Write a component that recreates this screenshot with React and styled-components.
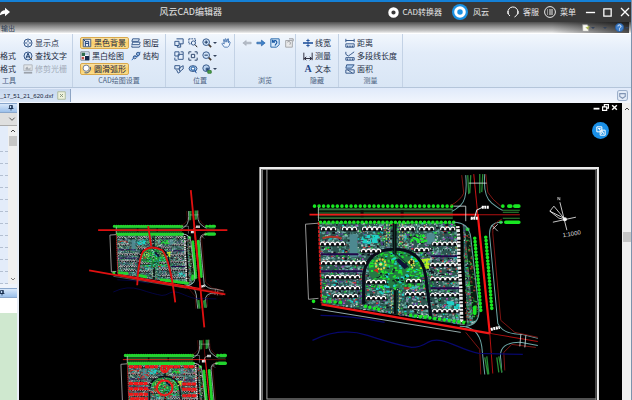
import React from "react";
import styled, { createGlobalStyle } from "styled-components";

const GlobalStyle = createGlobalStyle`
  * {
    box-sizing: border-box;
  }

  body {
    margin: 0;
    background: #000;
    overflow: hidden;
    font-family: "Liberation Sans", "Noto Sans CJK SC", sans-serif;
  }

  button {
    margin: 0;
    padding: 0;
    border: 0;
    background: none;
    color: inherit;
    font: inherit;
    cursor: pointer;
  }
`;

const Window = styled.div`
  display: flex;
  flex-direction: column;
  height: 100vh;
  border-right: 1px solid #7d93ad;
`;

const TitleBar = styled.header`
  display: flex;
  align-items: center;
  height: 22px;
  border-top: 2px solid #1480d6;
  background: #383838;
  color: #e6e6e6;
  font-family: "Noto Sans CJK SC", sans-serif;
  font-size: 8px;
  line-height: 12px;
`;

const Title = styled.h1`
  flex: 1;
  margin: 0;
  font-size: 9px;
  font-weight: 400;
  line-height: 18px;
  text-align: center;
`;

const TitleButton = styled.button`
  display: flex;
  align-items: center;
  gap: ${(props) => props.$gap || 4}px;
  margin-left: ${(props) => props.$space || 0}px;
  white-space: nowrap;
`;

const MenuTabs = styled.nav`
  display: flex;
  align-items: center;
  justify-content: space-between;
  height: 11px;
  padding: 0 2px 0 1px;
  background: linear-gradient(#4e4e4e, #868686 35%, #c6c6c6 80%, #f0f0f0);
  color: #2b3b52;
  font-family: "Noto Sans CJK SC", sans-serif;
  font-size: 7px;
  line-height: 10px;
`;

const MenuTools = styled.div`
  display: flex;
  align-items: center;
  gap: 8px;
  height: 11px;
  padding-left: 30px;
  background: linear-gradient(90deg, transparent, #0006 60%, #000a);
`;

const Ribbon = styled.div`
  display: flex;
  height: 55px;
  border-top: 1px solid #fff;
  border-bottom: 1px solid #b4c5da;
  background: linear-gradient(#f2f7fd, #e2ecf9 35%, #d9e6f5);
  color: #1c2b42;
  font-family: "Noto Sans CJK SC", sans-serif;
  font-size: 8px;
`;

const Group = styled.section`
  display: flex;
  flex-direction: column;
  width: ${(props) => props.$width}px;
  padding-top: 2px;
  border-right: 1px solid #c3d2e5;
`;

const GroupBody = styled.div`
  display: flex;
  gap: ${(props) => props.$gap || 4}px;
  height: 39px;
  padding-left: ${(props) => props.$inset || 0}px;
`;

const GroupName = styled.div`
  height: 12px;
  color: #4a5f80;
  font-size: 7px;
  line-height: 11px;
  text-align: center;
  padding-right: ${(props) => props.$shift || 0}px;
`;

const Column = styled.div`
  display: grid;
  grid-template-rows: repeat(3, 13px);
  align-items: center;
  justify-items: start;
`;

const Tool = styled.button`
  display: flex;
  align-items: center;
  gap: 2px;
  height: 12px;
  line-height: 11px;
  white-space: nowrap;
  color: ${(props) => (props.disabled ? "#a3adba" : "inherit")};
`;

const ActiveTool = styled(Tool)`
  width: 49px;
  padding-left: 1px;
  border: 1px solid #d9a94d;
  border-radius: 2px;
  background: linear-gradient(#fbe3a4, #f9cd69 50%, #fbdd8a);
`;

const IconTool = styled.button`
  display: flex;
  align-items: center;
  gap: 1px;
`;

const Caret = styled.i`
  border: 2px solid transparent;
  border-top-color: #33435c;
  border-bottom: 0;
`;

const FileTabs = styled.div`
  display: flex;
  align-items: center;
  justify-content: space-between;
  height: 15px;
  padding-right: 3px;
  background: linear-gradient(#e0eafa, #f2f6fd);
`;

const FileTab = styled.div`
  display: flex;
  align-items: center;
  justify-content: space-between;
  width: 71px;
  height: 13px;
  padding-right: 4px;
  border-right: 1px solid #8ea5c4;
  background: linear-gradient(#c8d8ee, #d8e5f6);
  color: #16243a;
  font-size: 6px;
`;

const Workspace = styled.main`
  display: flex;
  flex: 1;
  min-height: 0;
`;

const Side = styled.aside`
  display: flex;
  flex-direction: column;
  width: 19px;
  border-right: 2px solid #e8eef7;
  background: #eef3fb;
`;

const PanelHead = styled.div`
  display: flex;
  align-items: center;
  justify-content: flex-end;
  height: 10px;
  padding-right: ${(props) => props.$right}px;
  border: 1px solid #8aa7cc;
  border-width: 1px 0;
  background: linear-gradient(#d8e8fb, #9cc0ea);
`;

const PickerWrap = styled.div`
  display: grid;
  height: 13px;
  align-items: center;
  background: #dfdfdf;
  border-bottom: 1px solid #aaa;

  > * {
    grid-area: 1 / 1;
  }

  svg {
    justify-self: end;
    margin-right: 1px;
    pointer-events: none;
  }
`;

const Picker = styled.select`
  width: 100%;
  height: 12px;
  border: 0;
  padding: 0;
  background: transparent;
  appearance: none;
`;

const ListArea = styled.div`
  display: flex;
  height: 158px;
  margin-bottom: 4px;
`;

const Rows = styled.div`
  flex: 1;
  padding-top: 14px;
  overflow: hidden;
  background: #e3ecfa;
`;

const Row = styled.div`
  height: 12px;
  border-bottom: 1px dashed #b3bfd1;
`;

const ScrollBar = styled.div`
  display: flex;
  flex-direction: column;
  align-items: center;
  width: 9px;
  padding: ${(props) => props.$pad || 2}px 0;
  background: #f0f0f0;
`;

const Thumb = styled.div`
  width: 8px;
  height: 10px;
  margin-top: ${(props) => props.$top}px;
  background: #c6c6c6;
`;

const Spacer = styled.div`
  flex: 1;
`;

const EmptyLine = styled.div`
  height: 15px;
  background: #fff;
`;

const CommandLog = styled.div`
  flex: 1;
  background: #cfe8cf;
`;

const Canvas = styled.section`
  position: relative;
  flex: 1;
  overflow: hidden;
  background: #000;
`;

const Drawing = styled.svg`
  display: block;
  width: 100%;
`;

const ChildControls = styled.div`
  position: absolute;
  top: 1px;
  right: 4px;
  display: flex;
  gap: 2px;
`;

const FloatButton = styled.button`
  position: absolute;
  top: 19px;
  right: 13px;
  display: grid;
  place-items: center;
  width: 17px;
  height: 17px;
  border-radius: 50%;
  background: #1a8fe6;
`;

const Glyph = styled.svg`
  display: block;
  flex: none;
  fill: none;
  stroke: #3b5c8c;
  stroke-width: 1.2;
`;

const icons = {
  point: (
    <>
      <circle cx="6" cy="6" r="4.8" />
      <path d="M6 2v3M6 7v3M2 6h3M7 6h3" />
    </>
  ),
  find: (
    <>
      <circle cx="6" cy="6" r="4.8" fill="#d7e6f8" />
      <path d="M3.5 9L6 2.5 8.5 9M4.5 7h3" stroke="#20406f" />
      <path d="M8 8l3 3" stroke="#7d5a33" />
    </>
  ),
  trim: (
    <>
      <path d="M1 1h10v7H1z" fill="#e4e7ea" stroke="#b4b9c0" />
      <path d="M3 7V5l2-2 2 3 2-2v3z" fill="#a3a9b1" stroke="none" />
      <path d="M1 10.500h10" stroke="#9aa1aa" strokeWidth="2" />
    </>
  ),
  blackBg: (
    <>
      <path d="M1.500 1.500h9v9h-9z" fill="#e8edf5" stroke="#4b5f7c" />
      <path d="M4 10V4h4v6M4 6.500h4M1.500 1.500L4 4" stroke="#1d3f78" />
    </>
  ),
  blackWhite: (
    <>
      <path d="M1 1h10v10H1z" fill="#fff" stroke="#7c8897" />
      <path d="M2 2h4v4H2z" fill="#2d6a4c" stroke="none" />
      <path d="M6 6h5v5H6z" fill="#16284b" stroke="none" />
      <path d="M6 2h4v3H6z" fill="#b9cce6" stroke="none" />
      <path d="M2 7h3v3H2z" fill="#c04e46" stroke="none" />
    </>
  ),
  arc: (
    <>
      <circle cx="5" cy="5" r="3.700" fill="#fff" stroke="#73809a" />
      <path d="M10 3.500a5.500 5.500 0 0 1-7 7" stroke="#475f86" />
    </>
  ),
  layers: (
    <>
      <path d="M2 1h8l-1 3H1zM2 5h9l-1 3H1z" fill="#e5f0fb" />
      <path d="M1 9v2h9l1-2" />
    </>
  ),
  structure: (
    <>
      <path d="M1 11l4-5 3 1 3-6" stroke="#2b6cc0" />
      <circle cx="4.500" cy="7.500" r="1.800" />
      <circle cx="8.500" cy="3.500" r="2" fill="#8db6e8" />
    </>
  ),
  zoomWin: (
    <path d="M3 1h8v6H6M1 4h5v5H1zM4 9v2h4V7" fill="#dfeaf8" />
  ),
  zoomBox: (
    <>
      <path d="M1 1h8v3M1 1v6h3" strokeDasharray="2 1" />
      <circle cx="6.500" cy="6" r="2.500" fill="#e6f0fc" />
      <path d="M8.500 8l2.500 3" stroke="#222" />
    </>
  ),
  copyView: <path d="M1 1h5v5H1zM5 4h6v6H5zM8 1h3v3M1 8v3h3" fill="#e6f0fc" />,
  extents: (
    <path d="M1 4V1h3M8 1h3v3M11 8v3H8M4 11H1V8M4 4h4v4H4z" stroke="#31496e" />
  ),
  dynamic: (
    <>
      <path d="M1 2h6v4H1zM6 5l5-3v4L7 9z" fill="#dce9f8" />
      <path d="M3 7l2 4 3-2" />
    </>
  ),
  globe: (
    <>
      <ellipse cx="6" cy="5.500" rx="4.800" ry="3.500" fill="#9bc3ee" />
      <circle cx="6" cy="5.500" r="2" fill="#fff" stroke="#215b9c" />
      <path d="M8 7l2 4" stroke="#2155a0" />
    </>
  ),
  zoomIn: (
    <>
      <circle cx="5" cy="5" r="4" fill="#cfe2f7" />
      <path d="M3 5h4M5 3v4" stroke="#17345f" />
      <path d="M8 8l3 3" stroke="#453b31" strokeWidth="2" />
    </>
  ),
  zoomOut: (
    <>
      <circle cx="5" cy="5" r="4" fill="#cfe2f7" />
      <path d="M3 5h4" stroke="#17345f" />
      <path d="M8 8l3 3" stroke="#453b31" strokeWidth="2" />
    </>
  ),
  zoomAll: (
    <>
      <circle cx="5" cy="5" r="4" fill="#b9d2ef" />
      <path d="M5 5h3v3H5z" fill="#274670" />
      <path d="M7 8h4v3H7z" fill="#4ea84e" stroke="#397f39" />
    </>
  ),
  hand: (
    <path
      d="M4 11L1 7l1-1 2 1-1-5h1l1 3V1h1l1 4 1-4h1v5l1-2 1 1-1 4-2 2z"
      fill="#eef5fd"
      stroke="#5a83b8"
    />
  ),
  back: (
    <path
      d="M1 6l4-3v2h6v2H5v2z"
      fill="#b5bcc6"
      stroke="#9aa3af"
      strokeWidth=".6"
    />
  ),
  forward: (
    <path
      d="M11 6L6.500 2.500V5H1v2h5.500v2.500z"
      fill="#3f83cc"
      stroke="#235c9d"
      strokeWidth=".7"
    />
  ),
  rotate: (
    <>
      <path d="M1 1h10v7l-3 3H1z" fill="#d9eafb" stroke="#2f6dad" />
      <path d="M3 5c2-3 6-2 5 1L6 9M3 2v3h3" stroke="#1b5ba6" strokeWidth="1.500" />
    </>
  ),
  reset: (
    <>
      <path d="M2 3h8v8H2z" fill="#e9e9ea" stroke="#a7a9ad" />
      <path d="M4 5c2-2 5 0 3 3M6 1h5v3" stroke="#97999d" />
    </>
  ),
  lineWidth: (
    <>
      <path d="M0 6h12" stroke="#2a59a0" strokeWidth="2" />
      <path d="M6 1v10M4 3h4M4 9h4" stroke="#2a59a0" />
    </>
  ),
  measure: (
    <path d="M1 2v9M11 2v9M1 9h10M4 7L1.500 9 4 11M8 7l2.500 2L8 11" stroke="#334" />
  ),
  distance: (
    <path d="M1 3h10M1 1v4M11 1v4M1 7h10v4H1zM3 9v2M5 9v2M7 9v2M9 9v2" />
  ),
  polyline: (
    <path d="M1 1v3l3 2 3-2 4-3M1 8h10v3H1zM3 9v2M6 9v2M9 9v2" />
  ),
  area: (
    <>
      <path d="M2 1h9L8 5H1z" fill="#aecdf0" />
      <path d="M1 7h10v4H1zM3 7l6 4" />
    </>
  ),
  share: (
    <path
      d="M0 10c0-4 3-6 6-6V1l6 5-6 5V8c-3 0-4 1-6 2z"
      fill="#fff"
      stroke="none"
    />
  ),
  ring: <circle cx="6" cy="6" r="4" stroke="#fff" strokeWidth="3.400" />,
  brand: (
    <>
      <circle cx="6" cy="6" r="6" fill="#1b92e4" stroke="none" />
      <circle cx="6" cy="6" r="3.200" stroke="#fff" strokeWidth="2.300" />
    </>
  ),
  headset: (
    <path
      d="M3 10a5 5 0 1 1 6.500-.5L7.500 11M1 5v3M11 5v3"
      stroke="#fff"
      strokeWidth="1"
    />
  ),
  menu: (
    <>
      <circle cx="6" cy="6" r="5.400" stroke="#fff" strokeWidth=".9" />
      <path d="M3 4h1M5 4h4M3 6h1M5 6h4M3 8h1M5 8h4" stroke="#fff" strokeWidth=".9" />
    </>
  ),
  min: <path d="M1 6h10" stroke="#fff" strokeWidth="1.500" />,
  max: <path d="M2 2h8v8H2z" stroke="#fff" strokeWidth="1.400" />,
  close: <path d="M2 2l8 8M10 2l-8 8" stroke="#fff" strokeWidth="1.300" />,
  restore: (
    <path d="M4 4V1h7v6H8M1 5h7v6H1z" stroke="#fff" strokeWidth="2" />
  ),
  thickMin: <path d="M1 8h10" stroke="#fff" strokeWidth="3" />,
  thickClose: <path d="M2 2l8 8M10 2l-8 8" stroke="#fff" strokeWidth="2.500" />,
  tabClose: (
    <>
      <path d="M1 1h10v10H1z" fill="#eef3dd" stroke="#a9b89b" />
      <path d="M4 4l4 4M8 4L4 8" stroke="#859279" />
    </>
  ),
  panelToggle: (
    <>
      <rect x=".6" y=".6" width="10.800" height="10.800" rx="2" fill="#e3ebf7" stroke="#9db0cb" />
      <path d="M3 4h6v3L6 9 3 7z" stroke="#8094b3" />
    </>
  ),
  page: (
    <>
      <path d="M1 1h7l2 3v7H1z" fill="#fbfbf3" stroke="#999" />
      <path d="M6 5l3 3 2-5" fill="#b1c94d" stroke="#9a9a55" />
    </>
  ),
  help: (
    <>
      <circle cx="6" cy="6" r="5.500" fill="#3f7fcb" stroke="#2d5b97" />
      <path d="M4 4.500c0-3 4-2 4 0C8 6 6 6 6 7.500M6 8.500V10" stroke="#fff" />
    </>
  ),
  pin: (
    <path d="M3 1h6v6H3zM7 1v6M1 7h10M6 7v4" stroke="#0f2547" strokeWidth="1.500" />
  ),
  down: <path d="M2 4l4 4 4-4" stroke="#555" strokeWidth="1.500" />,
  up: <path d="M2 8l4-4 4 4" stroke="#444" strokeWidth="2" />,
  translate: (
    <>
      <path d="M1 1h6v6H1zM5 5h6v6H5z" fill="#1a8fe6" stroke="#fff" />
      <path d="M2.500 3h3M4 2.500V5M6.500 9.500L8 6.500l1.500 3" stroke="#fff" />
    </>
  ),
};

function Icon({ name, size = 10 }) {
  return (
    <Glyph width={size} height={size} viewBox="0 0 12 12" aria-hidden="true">
      {icons[name]}
    </Glyph>
  );
}

const LetterA = styled.span`
  width: 10px;
  color: #1f4688;
  font: bold 10px/11px "Liberation Serif", serif;
  text-align: center;
`;

// small repeatable generator so the site plan keeps the same grain
function makeRandom(seed) {
  let s = seed;
  return () => {
    s = (s * 1664525 + 1013904223) % 4294967296;
    return s / 4294967296;
  };
}

function specks(seed, count, box, max) {
  const rnd = makeRandom(seed);
  const [x, y, w, h] = box;
  let d = "";
  for (let i = 0; i < count; i++) {
    const px = (x + rnd() * w).toFixed(1);
    const py = (y + rnd() * h).toFixed(1);
    const sw = (0.7 + rnd() * max).toFixed(1);
    const sh = (0.7 + rnd() * max * 0.6).toFixed(1);
    d += `M${px} ${py}h${sw}v${sh}h-${sw}z`;
  }
  return d;
}

function dots(x1, y1, x2, y2, gap) {
  const n = Math.round(Math.hypot(x2 - x1, y2 - y1) / gap);
  let d = "";
  for (let i = 0; i <= n; i++) {
    const x = (x1 + ((x2 - x1) * i) / n).toFixed(1);
    const y = (y1 + ((y2 - y1) * i) / n).toFixed(1);
    d += `M${x} ${y}h.01`;
  }
  return d;
}

const site = [318, 221, 160, 110];

const grain = [
  ["#6fa8a4", 1300, 2.6],
  ["#4d8d80", 700, 2.6],
  ["#14121c", 420, 2.4],
  ["#5a3d96", 300, 2.2],
  ["#20d434", 380, 1.8],
  ["#c83c40", 260, 1.8],
  ["#c4d2ce", 520, 1.4],
  ["#18cccc", 150, 1.8],
  ["#a850b8", 150, 1.6],
];

const houses = [
  [321, 230, 3],
  [342, 230, 3],
  [362, 230, 4],
  [320, 245, 5],
  [321, 264, 9],
  [325, 278, 7],
  [325, 289, 7],
  [333, 297, 5],
  [366, 283, 4],
  [366, 299, 4],
  [361, 252, 4],
  [400, 230, 3],
  [419, 230, 3],
  [440, 230, 3],
  [432, 245, 5],
  [414, 251, 3],
  [430, 266, 6],
  [430, 280, 6],
  [406, 282, 3],
  [405, 295, 4],
  [430, 296, 6],
  [408, 308, 4],
  [432, 312, 6],
];

function housePath(x, y, n) {
  let d = "";
  for (let i = 0; i < n; i++) {
    d += `M${x + i * 5} ${y}v-2q2-2 4 0v2`;
  }
  return d;
}

function SitePlan({ tint, dense }) {
  return (
    <g fill="none">
      <g clipPath="url(#site-edge)">
        <rect x="312" y="218" width="170" height="114" fill="#2c5550" />
        {grain.map(([color, count, size], i) => (
          <path key={color} d={specks(i + 7, count, site, size)} fill={color} />
        ))}
        <path d="M349 234h8v23h-8zM426 233h8v11h-8z" fill="#4d8990" />
        <path d="M320 254h38M430 256h28M320 271h42M430 288h32" stroke="#22094a" strokeWidth="2" />
        <path d="M322 238q8-3 19 0M370 272l8-6M403 288h9" stroke="#b03424" strokeWidth="2" />
        <ellipse cx="395" cy="269" rx="27" ry="19" fill="#247a43" />
        <path d={specks(41, 180, [367, 250, 56, 38], 2.6)} fill="#1ee62c" />
        <path d={specks(42, 70, [374, 252, 42, 42], 2.6)} fill="#1ed2c8" />
        <path d={specks(43, 50, [374, 252, 42, 32], 2)} fill="#101825" />
        <path d={specks(44, 30, [360, 234, 16, 8], 4)} fill="#1ed2c8" />
        <path d={specks(45, 22, [443, 300, 18, 8], 4)} fill="#1ed2c8" />
        <path d={specks(46, 26, [409, 234, 14, 7], 3)} fill="#1ee62c" />
        <path d={specks(47, 26, [419, 258, 9, 9], 3)} fill="#b8ee20" />
        <path d="M363 304V274Q367 249 394 249T425 276L431 324" stroke="#080b18" strokeWidth="3" />
        <path d="M394 220v34M395 290v38" stroke="#081010" strokeWidth="4" />
        <path d="M394 220v34M391 250l15 13M396 288v38" stroke="#12332e" />
        <path
          d="M386 224v22M389 224v18M399 224v22M402 224v22M391 290v28M399 290v30"
          stroke="#c9d469"
          strokeDasharray="1.500 2"
        />
        <circle cx="380" cy="264" r="5" stroke="#e2d048" strokeWidth="2" strokeDasharray="2 1" />
        <circle cx="380" cy="264" r="1.500" fill="#f3e372" />
        <path d="M408 262l3-3 3 3-3 3zM411 268l3-3" stroke="#eedb55" strokeWidth="1.500" strokeDasharray="2 1" fill="#151309" />
        <path d="M398 258l10 8-4 3-8-8z" fill="#101238" />
        <path d="M373 270l4-2 1 5z" fill="#d42a1a" />
        {houses.map(([x, y, n]) => (
          <g key={`${x}-${y}`}>
            <path d={`M${x - 1} ${y - 3}h${n * 5 + 1}v4h-${n * 5 + 1}z`} fill="#0a0c10" />
            <path d={housePath(x, y, n)} stroke="#f4f4f4" strokeWidth="1.200" />
          </g>
        ))}
        <path d="M455 226h4l1 12v20l2 30 1 36" stroke="#000" strokeWidth="6" />
        <path
          d="M457 226l1 12v20l2 30 1 36"
          stroke="#eee"
          strokeWidth="3.500"
          strokeDasharray="2 1 3 1.500"
        />
        <path d="M468 230l8 90" stroke="#081d12" strokeWidth="7" />
        <path d={specks(51, 100, [464, 228, 12, 94], 1.5)} fill="#9c3830" />
        <path d={specks(52, 100, [464, 228, 12, 94], 1.5)} fill="#28a63a" />
        {dense && (
          <path d={specks(61, 500, site, 2.2)} fill="#b9c4c2" />
        )}
        {tint && (
          <>
            <path
              d="M321 229h26M354 229h26M402 229h24M433 229h22M321 263h38M321 274h40M321 285h40M324 294h36M430 264h28M430 275h30M430 288h30M394 224v14"
              stroke="#f01818"
              strokeWidth="6"
              strokeDasharray="9 1"
            />
            <path
              d="M378 272a16 15 0 1 1 32 0 16 15 0 1 1-32 0M387 232a7 8 0 1 1 14 0 7 8 0 1 1-14 0"
              stroke="#f01818"
              strokeWidth="4"
            />
            <path d={specks(62, 260, site, 3)} fill="#e81c1c" />
          </>
        )}
      </g>

      <path d="M317 208h135v10H317z" fill={dense ? "#1b7a2a" : "#164d22"} />
      <path d="M319 209h133M319 218h133" stroke="#3e874a" />
      <path d="M317 211h135M317 216h135" stroke="#071c0a" strokeWidth="1.500" />
      <path d="M360 210h3v7h-3zM400 210h3v7h-3z" fill="#091309" />
      <path d="M502 210h17M502 212h16M502 218h17" stroke="#2c8b35" />
      <path d="M309 214.500h168" stroke="#f01818" strokeWidth="1.700" />
      <path d="M477 214.500h42" stroke="#b01010" />
      <g
        stroke={dense ? "#22d42e" : "#18e822"}
        strokeWidth={dense ? 6.5 : 3.6}
        strokeLinecap="round"
      >
        <path d={dots(314, 206, 451, 206, 4.6)} />
        <path d={dots(320, 222, 453, 222, 4.2)} />
        <path d="M502 206h.1M508 206h2M514 206h4M500 222h.1M505 222h13" />
        <path d={dots(474, 238, 480, 310, 3.4)} />
        <path d={dots(485, 237, 491, 308, 3.4)} />
        <path d={dots(324, 301, 340, 302, 5)} />
        <path d={dots(365, 306, 378, 309, 4)} />
        <path d={dots(410, 315, 463, 322, 5)} />
        <path d="M467 229h.1M474 307v6M313 301h.1" />
      </g>
      <path
        d="M465 175q2 24-5 30t-9 6M484 174q-2 22 7 29t11 7M453 222q15 0 17 15l8 70q2 17-13 19M502 222q-15-1-13 15l8 86q5 11 24 11l16 4M459 326q19 0 22 20l3 28M537 345l-16-3q-24-1-21 17l1 13"
        stroke={dense ? "#b4c8c8" : "#6ea8a8"}
        strokeWidth={dense ? 1.6 : 1}
      />
      <path
        d="M461 175l2 18q-3 7-14 13M485 174l2 18q4 7 13 14M501 219q-10 4-9 14l8 87 14 12 23 5M465 332l14 17 1 25M535 347l-24-3-8 8 1 18"
        stroke="#9c1a18"
        strokeWidth=".8"
      />
      <path
        d="M467 175l1 19M470 175l-1 18M479 174v19M482 174l-1 18M484 357l3 17M486 356l2 18M496 357l2 15M498 356l3 16"
        stroke="#278c35"
        strokeWidth={dense ? 3 : 1.3}
      />
      <path d="M473 174l4 40" stroke="#c81414" />
      <path d="M477 214l12 119" stroke="#fa1414" strokeWidth="2.200" />
      <path d="M489 333l3 40M489 333l48 8" stroke="#b01010" />
      <path d="M468 183h18M453 206h12v15M520 334l-1 12M525 335l-1 12" stroke="#d9e4e4" strokeWidth=".8" />
      <path d="M470 219l4-2 2-7 8-4" stroke="#e8e8e8" />
      <path
        d="M470 218h7M481 207h7M490 329l9-2"
        stroke="#fff"
        strokeWidth={dense ? 5 : 3}
        strokeDasharray="2 .6"
      />
      <path d="M491 225l6 6M497 224l-5 5" stroke="#ddd" strokeWidth=".8" />
      <path d="M318 223l-13 1 3 75 10-1M318 207v14" stroke="#b9b9b9" strokeWidth={dense ? 1.6 : 0.8} />
      <path d="M318 222l3 81" stroke="#e01c1c" strokeWidth="1.600" strokeDasharray="3 1" />
      <path d="M321 304l168 29" stroke="#f01818" strokeWidth="2.400" />
      <path d="M312 308l148 24" stroke="#a5bcbc" strokeWidth=".9" />
      <path
        d="M312 340q28-14 55-5t44 12q8 0 16-5c14-8 30 7 51 11l44 1M320 315q30 0 64 7"
        stroke="#07076c"
        strokeWidth="1.200"
      />
    </g>
  );
}

function SiteDrawing() {
  return (
    <Drawing viewBox="19 103 602 297" role="img" aria-label="总平面图">
      <clipPath id="site-edge">
        <path d="M318 222h135q14 0 16 14l9 72q2 17-14 17L321 303z" />
      </clipPath>
      <g transform="translate(-39.700 125.100) scale(.49)">
        <SitePlan dense />
      </g>
      <g stroke="#e01010" strokeWidth="1.800" fill="none">
        <path d="M98 230h129M190.500 190l13.500 137M89 270l136 24M148 226l3 20" />
        <path d="M137 285q1-25 6-34 8-7 19-1 8 10 13 52" />
      </g>
      <g transform="translate(-28.700 254.100) scale(.49)">
        <SitePlan dense tint />
      </g>
      <g fill="none">
        <path d="M260 400V168H597v232" stroke="#ececec" strokeWidth="2" />
        <path d="M262 400V169.500H595v230" stroke="#808080" />
        <path d="M266.500 169v229.500H595" stroke="#a4a4a4" />
      </g>
      <SitePlan />
      <g stroke="#f4f4f4" fill="none">
        <path d="M552 222l23-5M559 202l7 28" strokeWidth=".8" />
        <path d="M549 211l4-5 10 12zM549 211l9 7 5 1" strokeWidth=".8" />
        <circle cx="564" cy="219" r="1.500" fill="#fff" />
        <path d="M557 200v-3l2 3v-3" strokeWidth=".6" />
      </g>
      <text
        x="562"
        y="237"
        fill="#ddd"
        fontSize="6"
        fontFamily="Liberation Sans, sans-serif"
        transform="rotate(-9 562 237)"
      >
        1:1000
      </text>
    </Drawing>
  );
}

function ToolButton({ icon, text, active, disabled }) {
  const Button = active ? ActiveTool : Tool;
  return (
    <Button type="button" disabled={disabled}>
      {icon === "A" ? <LetterA>A</LetterA> : icon && <Icon name={icon} />}
      <span>{text}</span>
    </Button>
  );
}

function IconButton({ icon, label, menu }) {
  return (
    <IconTool type="button" aria-label={label}>
      <Icon name={icon} />
      {menu && <Caret />}
    </IconTool>
  );
}

function App() {
  return (
    <>
      <GlobalStyle />
      <Window>
        <TitleBar>
          <TitleButton aria-label="分享">
            <Icon name="share" />
          </TitleButton>
          <Title>风云CAD编辑器</Title>
          <TitleButton $space={16}>
            <Icon name="ring" size={11} />
            CAD转换器
          </TitleButton>
          <TitleButton $space={10} $gap={5}>
            <Icon name="brand" size={16} />
            风云
          </TitleButton>
          <TitleButton $space={18}>
            <Icon name="headset" size={12} />
            客服
          </TitleButton>
          <TitleButton $space={5}>
            <Icon name="menu" size={12} />
            菜单
          </TitleButton>
          <TitleButton $space={9} aria-label="最小化">
            <Icon name="min" size={11} />
          </TitleButton>
          <TitleButton $space={6} aria-label="最大化">
            <Icon name="max" size={11} />
          </TitleButton>
          <TitleButton $space={6} aria-label="关闭">
            <Icon name="close" size={12} />
          </TitleButton>
        </TitleBar>

        <MenuTabs>
          <button type="button">输出</button>
          <MenuTools>
            <IconTool type="button" aria-label="样式">
              <Icon name="page" size={8} />
              <Caret />
            </IconTool>
            <Caret />
            <IconTool type="button" aria-label="帮助">
              <Icon name="help" size={9} />
              <Caret />
            </IconTool>
          </MenuTools>
        </MenuTabs>

        <Ribbon>
          <Group $width={73}>
            <GroupBody $gap={7}>
              <Column>
                <span />
                <ToolButton text="格式" />
                <ToolButton text="格式" />
              </Column>
              <Column>
                <ToolButton icon="point" text="显示点" />
                <ToolButton icon="find" text="查找文字" />
                <ToolButton icon="trim" text="修剪光栅" disabled />
              </Column>
            </GroupBody>
            <GroupName $shift={54}>工具</GroupName>
          </Group>
          <Group $width={93}>
            <GroupBody $inset={7} $gap={2}>
              <Column>
                <ToolButton icon="blackBg" text="黑色背景" active />
                <ToolButton icon="blackWhite" text="黑白绘图" />
                <ToolButton icon="arc" text="圆滑弧形" active />
              </Column>
              <Column>
                <ToolButton icon="layers" text="图层" />
                <ToolButton icon="structure" text="结构" />
              </Column>
            </GroupBody>
            <GroupName>CAD绘图设置</GroupName>
          </Group>
          <Group $width={69}>
            <GroupBody $inset={8}>
              <Column>
                <IconButton icon="zoomWin" label="窗口" />
                <IconButton icon="copyView" label="视图" />
                <IconButton icon="dynamic" label="动态" />
              </Column>
              <Column>
                <IconButton icon="zoomBox" label="框选" />
                <IconButton icon="extents" label="全图" />
                <IconButton icon="globe" label="实时" />
              </Column>
              <Column>
                <IconButton icon="zoomIn" label="放大" menu />
                <IconButton icon="zoomOut" label="缩小" menu />
                <IconButton icon="zoomAll" label="缩放" menu />
              </Column>
              <Column>
                <IconButton icon="hand" label="平移" />
              </Column>
            </GroupBody>
            <GroupName>位置</GroupName>
          </Group>
          <Group $width={61}>
            <GroupBody $inset={7}>
              <Column>
                <IconButton icon="back" label="后退" />
              </Column>
              <Column>
                <IconButton icon="forward" label="前进" />
              </Column>
              <Column>
                <IconButton icon="rotate" label="旋转" />
              </Column>
              <Column>
                <IconButton icon="reset" label="还原" />
              </Column>
            </GroupBody>
            <GroupName>浏览</GroupName>
          </Group>
          <Group $width={43}>
            <GroupBody $inset={7}>
              <Column>
                <ToolButton icon="lineWidth" text="线宽" />
                <ToolButton icon="measure" text="测量" />
                <ToolButton icon="A" text="文本" />
              </Column>
            </GroupBody>
            <GroupName>隐藏</GroupName>
          </Group>
          <Group $width={64}>
            <GroupBody $inset={6}>
              <Column>
                <ToolButton icon="distance" text="距离" />
                <ToolButton icon="polyline" text="多段线长度" />
                <ToolButton icon="area" text="面积" />
              </Column>
            </GroupBody>
            <GroupName>测量</GroupName>
          </Group>
        </Ribbon>

        <FileTabs>
          <FileTab>
            <button type="button">_17_51_21_620.dxf</button>
            <IconTool type="button" aria-label="关闭文件">
              <Icon name="tabClose" size={9} />
            </IconTool>
          </FileTab>
          <IconTool type="button" aria-label="面板">
            <Icon name="panelToggle" size={11} />
          </IconTool>
        </FileTabs>

        <Workspace>
          <Side>
            <PanelHead $right={3}>
              <Icon name="pin" size={6} />
            </PanelHead>
            <PickerWrap>
              <Picker aria-label="选择对象" />
              <Icon name="down" size={8} />
            </PickerWrap>
            <ListArea>
              <Rows>
                {Array.from({ length: 12 }, (_, i) => (
                  <Row key={i} />
                ))}
              </Rows>
              <ScrollBar>
                <Icon name="up" size={6} />
                <Thumb $top={2} />
                <Spacer />
                <Icon name="down" size={6} />
              </ScrollBar>
            </ListArea>
            <PanelHead $right={12}>
              <Icon name="pin" size={6} />
            </PanelHead>
            <EmptyLine />
            <CommandLog />
          </Side>
          <Canvas>
            <SiteDrawing />
            <ChildControls>
              <IconTool type="button" aria-label="最小化图纸">
                <Icon name="thickMin" size={7} />
              </IconTool>
              <IconTool type="button" aria-label="还原图纸">
                <Icon name="restore" size={7} />
              </IconTool>
              <IconTool type="button" aria-label="关闭图纸">
                <Icon name="thickClose" size={7} />
              </IconTool>
            </ChildControls>
            <FloatButton type="button" aria-label="转换">
              <Icon name="translate" />
            </FloatButton>
          </Canvas>
          <ScrollBar $pad={3}>
            <Icon name="up" size={6} />
            <Thumb $top={120} />
          </ScrollBar>
        </Workspace>
      </Window>
    </>
  );
}

export default App;
